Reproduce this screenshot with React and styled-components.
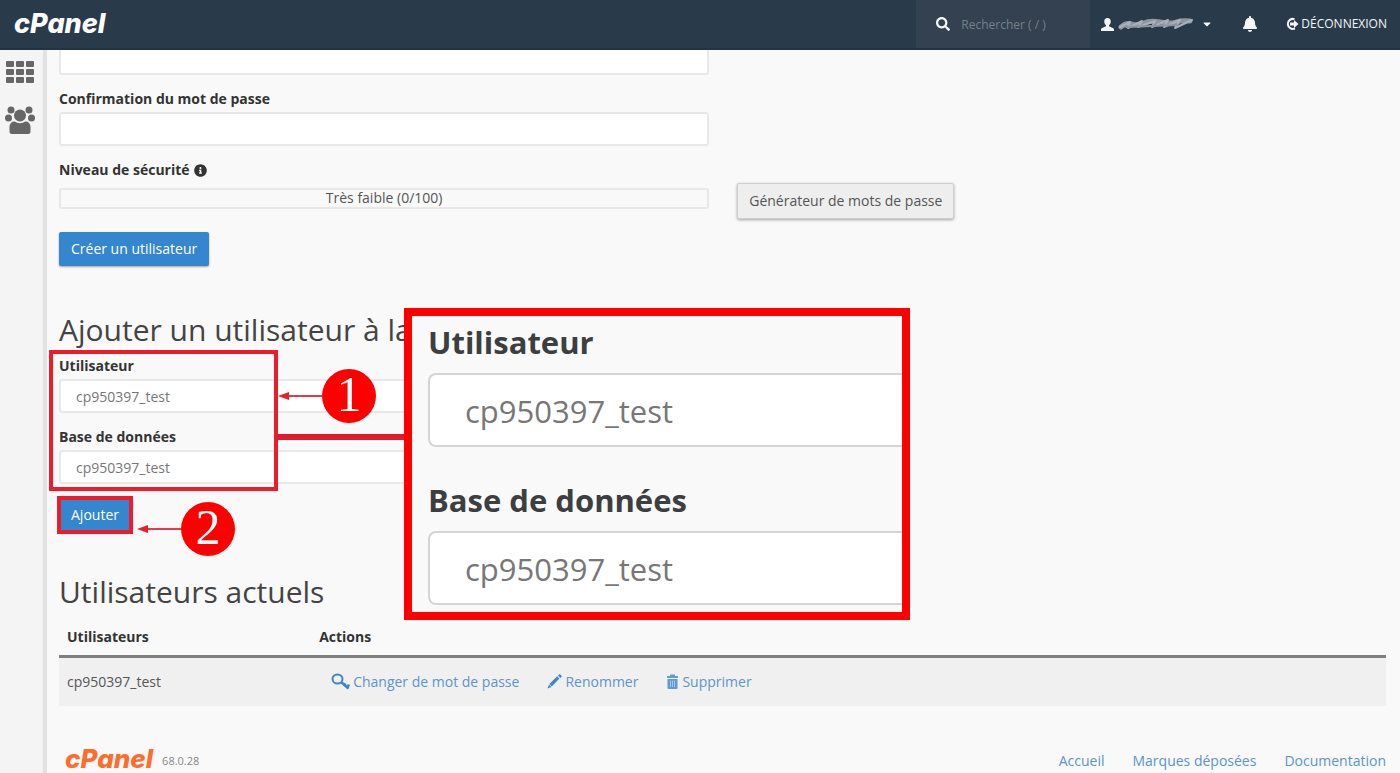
import React from "react";
import styled, { createGlobalStyle, css } from "styled-components";
import { FaSearch, FaBell, FaInfoCircle, FaCaretDown } from "react-icons/fa";

const GlobalStyle = createGlobalStyle`
  *, *::before, *::after { box-sizing: border-box; }
  body {
    margin: 0;
    background: #f9f9f9;
    color: #444;
    font-family: "Open Sans", "Noto Sans", sans-serif;
    font-size: 14px;
    line-height: 20px;
  }
  button, input, select { font-family: inherit; font-size: inherit; }
  svg { display: block; flex: none; }
`;

const RED = "#fe0000";
const MARK = "#ec1c2a";

const Shell = styled.div`
  display: flex;
  flex-direction: column;
  min-height: 100vh;
`;

const TopBar = styled.header`
  position: relative;
  z-index: 2;
  display: flex;
  align-items: stretch;
  height: 50px;
  padding: 0 13px 0 14px;
  background: #293a4a;
  border-bottom: 2px solid #243341;
  color: #f4f6f8;
`;

const Brand = styled.span`
  font-family: Inter, "Liberation Sans", sans-serif;
  font-weight: 800;
  font-style: italic;
  font-size: ${(p) => (p.$small ? 26 : 27)}px;
  line-height: ${(p) => (p.$small ? 20 : 24)}px;
  color: ${(p) => p.$color};
`;

const HomeLink = styled.a`
  display: flex;
  align-items: center;
  margin-right: auto;
  text-decoration: none;
`;

const Search = styled.form`
  display: flex;
  align-items: center;
  gap: 11px;
  width: 174px;
  padding: 0 12px 0 20px;
  background: #344150;
`;

const SearchInput = styled.input`
  min-width: 0;
  flex: 1;
  padding: 0;
  border: 0;
  background: transparent;
  color: #fff;
  font-size: 12px;
  &::placeholder { color: #74808c; opacity: 1; }
`;

const BarButton = styled.button`
  display: flex;
  align-items: center;
  gap: ${(p) => p.$gap || 0}px;
  margin-left: ${(p) => p.$space}px;
  padding: 0;
  border: 0;
  background: transparent;
  color: inherit;
`;

const LogoutLink = styled.a`
  display: flex;
  align-items: center;
  gap: 2px;
  margin-left: 27px;
  color: inherit;
  font-size: 12px;
  text-decoration: none;
`;

const Body = styled.div`
  display: flex;
  flex: 1;
`;

const Sidebar = styled.nav`
  display: flex;
  flex-direction: column;
  align-items: center;
  gap: 22px;
  flex: none;
  width: 47px;
  padding: 11px 4px 0 0;
  background: #f4f4f4;
  border-right: 4px solid #e2e2e2;
  color: #666;
`;

const SideLink = styled.a`
  color: inherit;
`;

const Content = styled.main`
  flex: 1;
  min-width: 0;
  padding: 0 14px 0 12px;
`;

const PasswordForm = styled.form`
  margin-top: -9px;
`;

const Field = styled.div`
  width: 49%;
  margin-bottom: 14px;
`;

const labelStyle = css`
  display: flex;
  align-items: center;
  gap: 4px;
  color: #333;
  font-size: 14px;
  font-weight: 700;
  line-height: 20px;
`;

const Label = styled.label`
  ${labelStyle}
  margin-bottom: 3px;
`;

const StrengthLabel = styled.div`
  ${labelStyle}
`;

const control = css`
  display: block;
  width: 100%;
  height: 34px;
  border: 2px solid #e8e8e8;
  border-radius: 3px;
  background: #fff;
  color: #777;
`;

const TextInput = styled.input`
  ${control}
  padding: 0 12px;
`;

const Select = styled.select`
  ${control}
  appearance: none;
  padding: 0 15px;
`;

const StrengthRow = styled.div`
  display: flex;
  align-items: flex-start;
  gap: 28px;
  padding-top: 3px;
  margin-bottom: 13px;
`;

const StrengthBar = styled.div`
  width: 49%;
  height: 21px;
  margin-top: 5px;
  border: 2px solid #e8e8e8;
  border-radius: 2px;
  color: #555;
  line-height: 16px;
  text-align: center;
`;

const PlainButton = styled.button`
  height: 36px;
  padding: 0 11px 2px;
  border: 1px solid #cfcfcf;
  border-radius: 2px;
  background: #eee;
  box-shadow: 0 1px 3px rgba(0, 0, 0, 0.35);
  color: #555;
`;

const PrimaryButton = styled.button`
  display: block;
  height: 34px;
  padding: 0 12px 2px;
  border: 0;
  border-radius: 2px;
  background: #3486cf;
  box-shadow: 0 1px 2px rgba(0, 0, 0, 0.35);
  color: #fff;
  ${(p) => p.$marked && css`
    border-radius: 0;
    outline: 4px solid ${MARK};
    outline-offset: -2px;
  `}
`;

const Heading = styled.h2`
  margin: 0 0 8px;
  color: #444;
  font-size: 30px;
  font-weight: 400;
  line-height: 36px;
`;

const AddSection = styled.section`
  position: relative;
  margin-top: 46px;
`;

const MarkBox = styled.div`
  position: absolute;
  top: 38px;
  left: -10px;
  width: 229px;
  height: 141px;
  border: 4px solid ${MARK};
  pointer-events: none;
`;

const MarkLine = styled.div`
  position: absolute;
  top: 122px;
  left: 217px;
  width: 130px;
  height: 6px;
  background: #e01c30;
`;

const Step = styled.div`
  position: absolute;
  top: ${(p) => p.$top}px;
  left: ${(p) => p.$left}px;
  display: flex;
  align-items: center;
`;

const StepDot = styled.span`
  width: 54px;
  height: 54px;
  border-radius: 50%;
  background: ${RED};
  color: #fff;
  font-family: "Liberation Serif", serif;
  font-size: 50px;
  line-height: 50px;
  text-align: center;
`;

const Callout = styled.div`
  position: absolute;
  z-index: 1;
  top: -4px;
  left: 345px;
  width: 506px;
  height: 312px;
  padding: 5px 0 0 16px;
  border: 8px solid ${RED};
  background: #f9f9f9;
  overflow: hidden;
`;

const CalloutField = styled.div`
  margin-bottom: 32px;
`;

const CalloutLabel = styled.label`
  display: block;
  margin-bottom: 10px;
  color: #3c3f41;
  font-size: 31px;
  font-weight: 700;
  line-height: 42px;
`;

const CalloutInput = styled.input`
  display: block;
  width: 100%;
  height: 74px;
  padding: 2px 35px 0;
  border: 2px solid #d4d4d4;
  border-right: 0;
  border-radius: 8px 0 0 8px;
  background: #fff;
  color: #777;
  font-size: 31px;
`;

const CurrentSection = styled.section`
  margin-top: 42px;
`;

const Table = styled.table`
  width: 100%;
  border-collapse: collapse;
  table-layout: fixed;
`;

const HeadCell = styled.th`
  width: ${(p) => p.$width || "auto"};
  padding: 9px 8px 8px;
  border-bottom: 3px solid #7d7f7e;
  color: #333;
  font-weight: 700;
  text-align: left;
`;

const Cell = styled.td`
  height: 49px;
  padding: 0 8px;
  background: #f0f0f0;
  color: #555;
`;

const Actions = styled.div`
  display: flex;
  gap: 28px;
  padding-left: 12px;
`;

const Link = styled.a`
  display: inline-flex;
  align-items: center;
  gap: 3px;
  color: #5b94cf;
  text-decoration: none;
`;

const Footer = styled.footer`
  display: flex;
  align-items: flex-end;
  gap: 9px;
  height: 24px;
  margin-top: 41px;
  padding-left: 6px;
`;

const BrandSlot = styled.a`
  display: flex;
  align-self: center;
  text-decoration: none;
`;

const Version = styled.span`
  color: #888;
  font-size: 11px;
`;

const FooterLinks = styled.nav`
  display: flex;
  gap: 28px;
  margin-left: auto;
`;

const UserIcon = () => (
  <svg width="13" height="13" viewBox="0 0 12 13" fill="currentColor" preserveAspectRatio="none" aria-hidden="true">
    <path d="M6 0C8 0 9 1.400 9 3.500C9 5.200 8.300 6.500 7.400 7.200V8.200C8.500 8.900 12 9.700 12 11.500V13H0V11.500C0 9.700 3.500 8.900 4.600 8.200V7.200C3.700 6.500 3 5.200 3 3.500C3 1.400 4 0 6 0Z" />
  </svg>
);

const HiddenName = () => (
  <svg width="79" height="14" viewBox="0 0 79 14" fill="none" strokeLinecap="round" strokeLinejoin="round" role="img" aria-label="Compte">
    <path d="M3 10Q8 5 14 7T26 6T42 5T58 5T72 4" stroke="#8c97a1" strokeWidth="5" />
    <path d="M2 10L12 5L10 11L24 4L20 10L37 4L34 10L50 3L46 10L62 3L57 11L74 3" stroke="#a9b1b9" strokeWidth="2" />
    <path d="M8 10L60 8" stroke="#8c97a1" strokeWidth="2" />
  </svg>
);

const LogoutIcon = () => (
  <svg width="14" height="14" viewBox="0 0 14 14" aria-hidden="true">
    <path d="M9.500 2.200A5 5 0 1 0 10 11.400" fill="none" stroke="currentColor" strokeWidth="2" />
    <path d="M5 5.500H9V3L13.500 7L9 11V8.500H5Z" fill="currentColor" />
  </svg>
);

const GridIcon = () => (
  <svg width="28" height="23" viewBox="0 0 28 23" fill="currentColor" aria-hidden="true">
    {[0, 8, 16].map((y) =>
      [0, 10, 20].map((x) => <rect key={`${x}-${y}`} x={x} y={y} width="8" height="6" rx="1" />)
    )}
  </svg>
);

const GroupIcon = () => (
  <svg width="30" height="29" viewBox="0 0 30 29" fill="currentColor" aria-hidden="true">
    <circle cx="6" cy="4" r="3.500" />
    <circle cx="24" cy="4" r="3.500" />
    <circle cx="3.500" cy="12" r="3.500" />
    <circle cx="26.500" cy="12" r="3.500" />
    <circle cx="15" cy="9.500" r="6" />
    <path d="M4.500 21C4.500 17.500 7 15.500 9.500 15.500Q15 19 20.500 15.500C23 15.500 25.500 17.500 25.500 21V25.500Q25.500 28 23 28H7Q4.500 28 4.500 25.500Z" />
  </svg>
);

const KeyIcon = () => (
  <svg width="19" height="17" viewBox="0 0 19 17" fill="none" stroke="#3d86cc" aria-hidden="true">
    <ellipse cx="6.500" cy="6" rx="5" ry="4.500" strokeWidth="2" />
    <path d="M10 9L17.500 15.500" strokeWidth="2.500" />
    <path d="M13 12.500L14.500 10.500M16 15.500L18 11.500" strokeWidth="2.500" />
  </svg>
);

const PencilIcon = () => (
  <svg width="15" height="15" viewBox="0 0 15 15" fill="#3d86cc" aria-hidden="true">
    <path d="M0.500 14.500L2 10.500L4.500 13Z" />
    <path d="M2.400 10L10.200 2.200L12.400 4.400L4.800 12.400Z" />
    <path d="M11 1.400L12 0.400Q12.700 0 13.300 0.500L14.500 1.700Q15 2.300 14.500 3L13.200 4Z" />
  </svg>
);

const TrashIcon = () => (
  <svg width="13" height="15" viewBox="0 0 13 15" aria-hidden="true">
    <path d="M4 2V0.500H9V2H12V4H1V2Z" fill="#5f9ad4" />
    <path d="M1.500 5H11.500V14Q11.500 15 10.500 15H2.500Q1.500 15 1.500 14Z" fill="#5f9ad4" />
    <path d="M4.500 6.500V13M6.500 6.500V13M8.500 6.500V13" stroke="#a5c6e6" strokeWidth="1" />
  </svg>
);

const Arrow = () => (
  <svg width="44" height="8" viewBox="0 0 44 8" aria-hidden="true">
    <path d="M8 4H44" stroke="#e63a48" strokeWidth="2" />
    <path d="M0 4L11 0V8Z" fill={MARK} />
  </svg>
);

const steps = [
  { number: 1, top: 57, left: 219 },
  { number: 2, top: 190, left: 78 },
];

const choices = [
  { id: "user", label: "Utilisateur", value: "cp950397_test" },
  { id: "database", label: "Base de données", value: "cp950397_test" },
];

const actions = [
  { label: "Changer de mot de passe", Icon: KeyIcon },
  { label: "Renommer", Icon: PencilIcon },
  { label: "Supprimer", Icon: TrashIcon },
];

export default function App() {
  return (
    <Shell>
      <GlobalStyle />
      <TopBar>
        <HomeLink href="#home"><Brand $color="#fff">cPanel</Brand></HomeLink>
        <Search role="search">
          <FaSearch size={14} aria-hidden="true" />
          <SearchInput type="search" aria-label="Rechercher" placeholder="Rechercher ( / )" />
        </Search>
        <BarButton type="button" $space={11} $gap={4}>
          <UserIcon />
          <HiddenName />
          <FaCaretDown size={12} aria-hidden="true" />
        </BarButton>
        <BarButton type="button" $space={29} aria-label="Notifications">
          <FaBell size={16} />
        </BarButton>
        <LogoutLink href="#logout"><LogoutIcon />DÉCONNEXION</LogoutLink>
      </TopBar>
      <Body>
        <Sidebar aria-label="Menu principal">
          <SideLink href="#tools" aria-label="Outils"><GridIcon /></SideLink>
          <SideLink href="#users" aria-label="Utilisateurs"><GroupIcon /></SideLink>
        </Sidebar>
        <Content>
          <PasswordForm>
            <Field>
              <TextInput type="password" aria-label="Mot de passe" />
            </Field>
            <Field>
              <Label htmlFor="confirm">Confirmation du mot de passe</Label>
              <TextInput id="confirm" type="password" />
            </Field>
            <StrengthLabel>Niveau de sécurité <FaInfoCircle size={13} aria-hidden="true" /></StrengthLabel>
            <StrengthRow>
              <StrengthBar>Très faible (0/100)</StrengthBar>
              <PlainButton type="button">Générateur de mots de passe</PlainButton>
            </StrengthRow>
            <PrimaryButton type="button">Créer un utilisateur</PrimaryButton>
          </PasswordForm>

          <AddSection>
            <Heading>Ajouter un utilisateur à la</Heading>
            {choices.map((c) => (
              <Field key={c.id}>
                <Label htmlFor={c.id}>{c.label}</Label>
                <Select id={c.id}><option>{c.value}</option></Select>
              </Field>
            ))}
            <PrimaryButton type="button" $marked>Ajouter</PrimaryButton>
            <MarkBox />
            <MarkLine />
            {steps.map((s) => (
              <Step key={s.number} $top={s.top} $left={s.left}>
                <Arrow />
                <StepDot>{s.number}</StepDot>
              </Step>
            ))}
            <Callout>
              {choices.map((c) => (
                <CalloutField key={c.id}>
                  <CalloutLabel htmlFor={`${c.id}-large`}>{c.label}</CalloutLabel>
                  <CalloutInput id={`${c.id}-large`} readOnly value={c.value} />
                </CalloutField>
              ))}
            </Callout>
          </AddSection>

          <CurrentSection>
            <Heading>Utilisateurs actuels</Heading>
            <Table>
              <thead>
                <tr>
                  <HeadCell $width="19%">Utilisateurs</HeadCell>
                  <HeadCell>Actions</HeadCell>
                </tr>
              </thead>
              <tbody>
                <tr>
                  <Cell>cp950397_test</Cell>
                  <Cell>
                    <Actions>
                      {actions.map(({ label, Icon }) => (
                        <Link key={label} href="#action"><Icon />{label}</Link>
                      ))}
                    </Actions>
                  </Cell>
                </tr>
              </tbody>
            </Table>
          </CurrentSection>

          <Footer>
            <BrandSlot href="#home"><Brand $small $color="#ff6c2c">cPanel</Brand></BrandSlot>
            <Version>68.0.28</Version>
            <FooterLinks aria-label="Liens">
              <Link href="#home">Accueil</Link>
              <Link href="#trademarks">Marques déposées</Link>
              <Link href="#docs">Documentation</Link>
            </FooterLinks>
          </Footer>
        </Content>
      </Body>
    </Shell>
  );
}
